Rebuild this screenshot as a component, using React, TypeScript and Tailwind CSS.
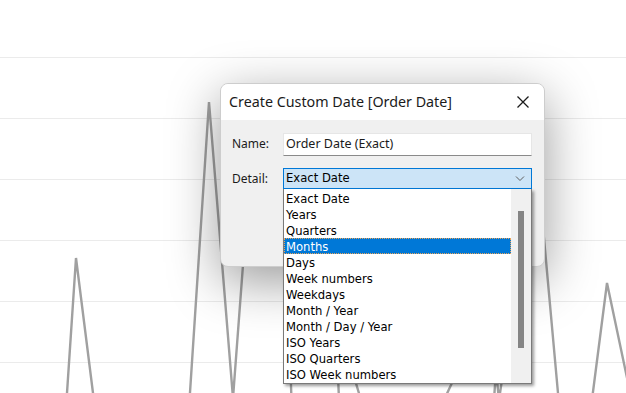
export default function App() {
  const items = [
    "Exact Date",
    "Years",
    "Quarters",
    "Months",
    "Days",
    "Week numbers",
    "Weekdays",
    "Month / Year",
    "Month / Day / Year",
    "ISO Years",
    "ISO Quarters",
    "ISO Week numbers",
  ];
  const grid = [57, 118, 179, 240, 301, 362];
  const chart =
    "M65.2,420 L76,258 L96.4,420 " +
    "M188.2,420 L209,102 L233,398 L243,265 L254,130 " +
    "M291.5,400 L288,300 " +
    "M339,400 L335,300 " +
    "M340,330 L361,400 " +
    "M444,400 L472,340 " +
    "M494,400 L496,370 L499,400 L536,150 L558,393 L572,555 L607,283 L626,373 L640,440";
  return (
    <div className="relative w-[626px] h-[393px] overflow-hidden bg-white">
      <svg className="absolute inset-0" width="626" height="393">
        {grid.map((y) => (
          <line key={y} x1="0" x2="626" y1={y + 0.5} y2={y + 0.5} stroke="#ebebeb" strokeWidth="1" />
        ))}
        <path d={chart} fill="none" stroke="#a0a0a0" strokeWidth="2.4" strokeLinejoin="miter" />
      </svg>

      <div className="absolute left-[220px] top-[83px] w-[325px] h-[184px] rounded-[8px] border border-[#cdcdcd] bg-[#f0f0f0] shadow-[0_14px_52px_rgba(0,0,0,0.4)] overflow-hidden flex flex-col font-['Noto_Sans',sans-serif] text-[#1b1b1b]">
        <div className="h-[36px] bg-white flex items-center justify-between pl-[8px] pr-[15px]">
          <span className="text-[14.3px] leading-none">Create Custom Date [Order Date]</span>
          <svg width="12" height="12" viewBox="0 0 12 12">
            <path d="M0.5,0.5 L11.5,11.5 M11.5,0.5 L0.5,11.5" stroke="#1b1b1b" strokeWidth="1.3" />
          </svg>
        </div>
        <div className="flex flex-col gap-[12px] pl-[11px] pr-[12px] pt-[13px]">
          <div className="flex items-center">
            <span className="w-[51px] text-[12px] leading-none -mt-[2px]">Name:</span>
            <div className="flex-1 h-[23px] bg-white border border-[#e6e6e6] border-b-[#8a8a8a] flex items-center pl-[2px] text-[12.5px] leading-none">
              Order Date (Exact)
            </div>
          </div>
          <div className="flex items-center">
            <span className="w-[51px] text-[12px] leading-none">Detail:</span>
            <div className="flex-1 h-[21px] bg-[#cce4f7] border border-[#0078d7] flex items-center justify-between pl-[2px] pr-[6px] pt-[1px] font-['DejaVu_Sans',sans-serif] text-[11.6px] leading-none text-black">
              <span>Exact Date</span>
              <svg width="10" height="6" viewBox="0 0 10 6">
                <path d="M1,0.5 L5,4.5 L9,0.5" fill="none" stroke="#5f5f5f" strokeWidth="1" />
              </svg>
            </div>
          </div>
        </div>
      </div>

      <div className="absolute left-[283px] top-[189px] w-[249px] h-[195px] bg-white border border-[#7a7a7a] border-t-0 shadow-[2px_2px_3px_rgba(0,0,0,0.4)] flex font-['DejaVu_Sans',sans-serif] text-[11.6px] text-black">
        <div className="w-[227px] flex flex-col pt-[1px]">
          {items.map((it) =>
            it === "Months" ? (
              <div
                key={it}
                className="h-[16px] leading-[14px] pt-[1px] pl-[1px] bg-[#0078d7] text-white border border-dotted border-[#e8a45a]"
              >
                {it}
              </div>
            ) : (
              <div key={it} className="h-[16px] leading-[16px] pt-[1px] pl-[2px]">
                {it}
              </div>
            )
          )}
        </div>
        <div className="w-[20px] bg-[#f0f0f0] flex flex-col items-center pt-[22px]">
          <div className="w-[6px] h-[137px] bg-[#858585]" />
        </div>
      </div>
    </div>
  );
}
